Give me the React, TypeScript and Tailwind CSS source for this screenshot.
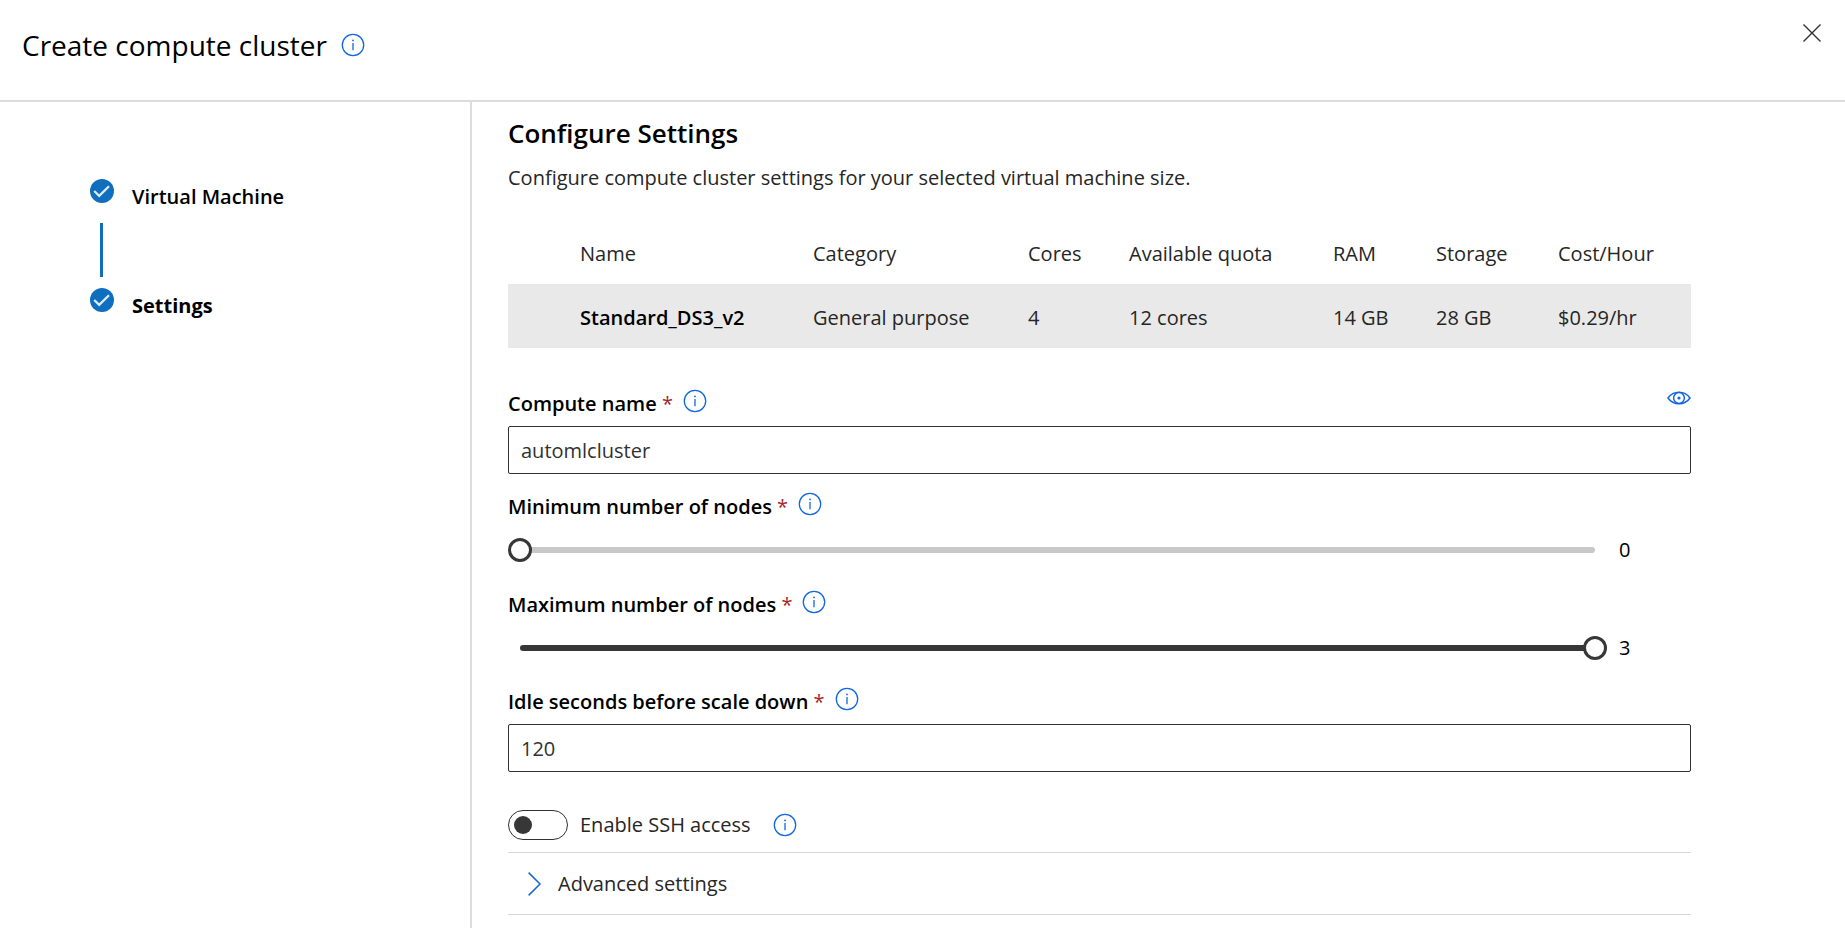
import { useState } from "react";

function InfoIcon() {
  return (
    <svg viewBox="0 0 24 24" className="size-6 shrink-0" fill="none" aria-hidden="true">
      <circle cx="12" cy="12" r="10.7" stroke="#1267e0" strokeWidth="1.3" />
      <path d="M12 10v7.2" stroke="#1267e0" strokeWidth="1.3" />
      <circle cx="12" cy="7.4" r="0.9" fill="#1267e0" />
    </svg>
  );
}

function InfoButton({ label }: { label: string }) {
  return (
    <button type="button" aria-label={label} className="shrink-0">
      <InfoIcon />
    </button>
  );
}

function CheckBadge() {
  return (
    <svg viewBox="0 0 24 24" className="size-6 shrink-0" aria-hidden="true">
      <circle cx="12" cy="12" r="12" fill="#106ebe" />
      <path d="M4.2 12l5 4.800 9.800-9.600" fill="none" stroke="#dcebf8" strokeWidth="2.300" />
    </svg>
  );
}

function EyeIcon() {
  return (
    <svg viewBox="0 0 24 14" className="h-3.5 w-6" fill="none" stroke="#1267e0" aria-hidden="true">
      <path d="M1 7C3.6 3.2 7.4 1.2 12 1.2S20.400 3.200 23 7c-2.600 3.800-6.400 5.800-11 5.800S3.600 10.800 1 7z" strokeWidth="1.5" />
      <circle cx="12" cy="7" r="5.400" strokeWidth="1.5" />
      <circle cx="12" cy="7" r="1.600" fill="#1267e0" stroke="none" />
    </svg>
  );
}

function FieldLabel({ htmlFor, text }: { htmlFor: string; text: string }) {
  return (
    <div className="flex items-center">
      <label htmlFor={htmlFor} className="text-xl leading-7 font-semibold text-black">
        {text} <span className="font-normal text-[#a4262c]">*</span>
      </label>
      <div className="mb-1.5 ml-2.5 flex">
        <InfoButton label={`About ${text.toLowerCase()}`} />
      </div>
    </div>
  );
}

function TextField({ id, value, onChange }: { id: string; value: string; onChange: (v: string) => void }) {
  return (
    <input
      id={id}
      type="text"
      value={value}
      onChange={(e) => onChange(e.target.value)}
      className="h-12 w-full rounded-xs border border-[#323130] bg-white px-3 text-xl text-[#323130]"
    />
  );
}

function NodeSlider({ id, value, onChange }: { id: string; value: number; onChange: (v: number) => void }) {
  return (
    <div className="flex items-center">
      <div className="mr-3 grid flex-1 items-center">
        <div className="col-start-1 row-start-1 mx-3 h-1.5 overflow-hidden rounded-full bg-[#c8c8c8]">
          <div className="h-full bg-[#373737]" style={{ width: `${(value / 3) * 100}%` }} />
        </div>
        <input
          id={id}
          type="range"
          min={0}
          max={3}
          value={value}
          onChange={(e) => onChange(Number(e.target.value))}
          className="z-10 col-start-1 row-start-1 h-6 w-full appearance-none bg-transparent [&::-webkit-slider-thumb]:size-6 [&::-webkit-slider-thumb]:appearance-none [&::-webkit-slider-thumb]:rounded-full [&::-webkit-slider-thumb]:border-3 [&::-webkit-slider-thumb]:border-[#373737] [&::-webkit-slider-thumb]:bg-white"
        />
      </div>
      <output htmlFor={id} className="w-18 text-xl leading-7 text-black">
        {value}
      </output>
    </div>
  );
}

export default function App() {
  const [name, setName] = useState("automlcluster");
  const [minNodes, setMinNodes] = useState(0);
  const [maxNodes, setMaxNodes] = useState(3);
  const [idle, setIdle] = useState("120");
  const [ssh, setSsh] = useState(false);

  return (
    <div className="flex h-screen flex-col overflow-hidden bg-white font-['Open_Sans',sans-serif] text-xl text-[#262626]">
      <header className="flex shrink-0 items-start justify-between border-b-2 border-[#dcdcdc] pt-6 pr-6 pb-[34px] pl-[22px]">
        <div className="flex items-center gap-3.5">
          <h1 className="text-[28px] leading-[42px] text-black">Create compute cluster</h1>
          <InfoButton label="About compute clusters" />
        </div>
        <button type="button" aria-label="Close">
          <svg viewBox="0 0 18 18" className="size-[18px]" stroke="#323130" strokeWidth="1.4" aria-hidden="true">
            <path d="M0.500 0.500l17 17M17.500 0.500l-17 17" />
          </svg>
        </button>
      </header>

      <div className="flex min-h-0 flex-1">
        <nav aria-label="Steps" className="w-[472px] shrink-0 border-r-2 border-[#dcdcdc] pt-[77px] pl-[90px]">
          <ol>
            <li className="flex gap-[18px]">
              <div className="flex flex-col">
                <CheckBadge />
                <div className="mt-5 mb-[11px] ml-2.5 h-[54px] w-[3px] bg-[#106ebe]" />
              </div>
              <a href="#virtual-machine" className="self-start pt-1 leading-7 font-semibold text-black">
                Virtual Machine
              </a>
            </li>
            <li className="flex gap-[18px]">
              <CheckBadge />
              <a href="#settings" aria-current="step" className="pt-1 leading-7 font-bold text-black">
                Settings
              </a>
            </li>
          </ol>
        </nav>

        <main className="min-w-0 flex-1 overflow-hidden pt-[15px] pr-[154px] pl-9">
          <h2 className="text-[26px] leading-8 font-semibold text-black">Configure Settings</h2>
          <p className="mt-[13px] leading-8">Configure compute cluster settings for your selected virtual machine size.</p>

          <table className="mt-[26px] w-full table-fixed text-left">
            <colgroup>
              <col className="w-[305px]" />
              <col className="w-[215px]" />
              <col className="w-[101px]" />
              <col className="w-[204px]" />
              <col className="w-[103px]" />
              <col className="w-[122px]" />
              <col className="w-[133px]" />
            </colgroup>
            <thead>
              <tr className="h-16">
                <th scope="col" className="pt-1 pl-18 font-normal">Name</th>
                <th scope="col" className="pt-1 font-normal">Category</th>
                <th scope="col" className="pt-1 font-normal">Cores</th>
                <th scope="col" className="pt-1 font-normal">Available quota</th>
                <th scope="col" className="pt-1 font-normal">RAM</th>
                <th scope="col" className="pt-1 font-normal">Storage</th>
                <th scope="col" className="pt-1 font-normal">Cost/Hour</th>
              </tr>
            </thead>
            <tbody>
              <tr className="h-16 bg-[#e9e9e9]">
                <td className="pt-1 pl-18 font-semibold text-black">Standard_DS3_v2</td>
                <td className="pt-1">General purpose</td>
                <td className="pt-1">4</td>
                <td className="pt-1">12 cores</td>
                <td className="pt-1">14 GB</td>
                <td className="pt-1">28 GB</td>
                <td className="pt-1">$0.29/hr</td>
              </tr>
            </tbody>
          </table>

          <div className="mt-[41px] flex items-start justify-between">
            <FieldLabel htmlFor="compute-name" text="Compute name" />
            <button type="button" aria-label="Preview" className="pt-0.5">
              <EyeIcon />
            </button>
          </div>
          <div className="mt-[7px]">
            <TextField id="compute-name" value={name} onChange={setName} />
          </div>

          <div className="mt-[18px]">
            <FieldLabel htmlFor="min-nodes" text="Minimum number of nodes" />
          </div>
          <div className="mt-3.5">
            <NodeSlider id="min-nodes" value={minNodes} onChange={setMinNodes} />
          </div>

          <div className="mt-[26px]">
            <FieldLabel htmlFor="max-nodes" text="Maximum number of nodes" />
          </div>
          <div className="mt-3.5">
            <NodeSlider id="max-nodes" value={maxNodes} onChange={setMaxNodes} />
          </div>

          <div className="mt-[25px]">
            <FieldLabel htmlFor="idle-seconds" text="Idle seconds before scale down" />
          </div>
          <div className="mt-[7px]">
            <TextField id="idle-seconds" value={idle} onChange={setIdle} />
          </div>

          <div className="mt-[38px] flex items-center border-b border-[#d6d6d6] pb-3">
            <button
              id="ssh"
              type="button"
              role="switch"
              aria-checked={ssh}
              onClick={() => setSsh(!ssh)}
              className={`flex h-[30px] w-[60px] items-center rounded-full border border-[#323130] px-[5px] ${ssh ? "justify-end" : "justify-start"}`}
            >
              <span className="size-[18px] rounded-full bg-[#373737]" />
            </button>
            <label htmlFor="ssh" className="mr-5.5 ml-3 leading-7">
              Enable SSH access
            </label>
            <InfoButton label="About SSH access" />
          </div>

          <button
            type="button"
            aria-expanded={false}
            className="flex w-full items-center gap-4 border-b border-[#d6d6d6] py-4 pl-5 text-left leading-[29px]"
          >
            <svg viewBox="0 0 14 24" className="h-6 w-3.5" fill="none" stroke="#1b66d2" strokeWidth="1.5" aria-hidden="true">
              <path d="M0.600 0.600L12 12 0.600 23.400" />
            </svg>
            Advanced settings
          </button>
        </main>
      </div>
    </div>
  );
}
